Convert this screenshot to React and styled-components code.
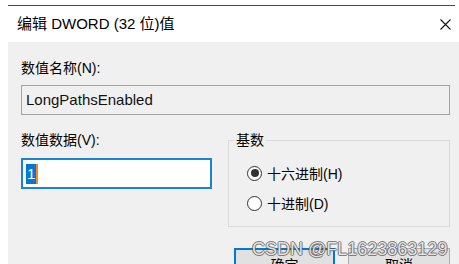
import React from "react";
import styled, { createGlobalStyle } from "styled-components";

const Global = createGlobalStyle`
  html, body { margin: 0; padding: 0; background: #ffffff; }
  body { font-family: "Liberation Sans", "Noto Sans CJK SC", sans-serif; color: #000; }
`;

const Page = styled.div`
  position: relative;
  width: 459px;
  height: 264px;
  overflow: hidden;
  background: #ffffff;
`;

const TopStrip = styled.div`
  height: 6px;
  display: flex;
  flex-direction: column;
  justify-content: flex-end;
`;

const TopRule = styled.div`
  height: 1px;
  margin: 0 4px 0 8px;
  background: #4a4a4a;
`;

const Dialog = styled.div`
  margin-left: 8px;
  display: flex;
  flex-direction: column;
`;

const TitleBar = styled.div`
  height: 36px;
  display: flex;
  align-items: center;
  justify-content: space-between;
  padding: 0 8px 0 9px;
  background: #ffffff;
`;

const Title = styled.div`
  font-size: 15px;
  line-height: 18px;
  color: #000;
`;

const Body = styled.div`
  background: #f0f0f0;
  padding: 17px 9px 0 13px;
  height: 240px;
  box-sizing: border-box;
`;

const FieldLabel = styled.div`
  font-size: 14px;
  line-height: 18px;
  color: #000;
`;

const NameBox = styled.div`
  margin-top: 8px;
  height: 30px;
  box-sizing: border-box;
  border: 1px solid #a3a3a3;
  background: #f0f0f0;
  padding-left: 4px;
  font-size: 15px;
  line-height: 28px;
  color: #111;
`;

const Row = styled.div`
  margin-top: 16px;
  display: flex;
  gap: 16px;
  align-items: flex-start;
`;

const DataColumn = styled.div`
  width: 191px;
  display: flex;
  flex-direction: column;
`;

const DataBox = styled.div`
  margin-top: 9px;
  height: 31px;
  box-sizing: border-box;
  border: 2px solid #1883d7;
  background: #ffffff;
  padding-left: 3px;
  display: flex;
  align-items: center;
`;

const Selected = styled.span`
  display: inline-block;
  height: 20px;
  line-height: 20px;
  padding: 0 1px;
  background: #0078d7;
  color: #ffffff;
  font-size: 15px;
`;

const Caret = styled.span`
  display: inline-block;
  width: 2px;
  height: 20px;
  background: #f08a24;
`;

const BaseGroup = styled.fieldset`
  flex: 1;
  margin: 0;
  padding: 0;
  min-width: 0;
  border: 1px solid #dadada;
`;

const Legend = styled.legend`
  margin-left: 5px;
  padding: 0 2px;
  font-size: 14px;
  line-height: 18px;
`;

const RadioList = styled.div`
  padding: 9px 0 8px 18px;
  display: flex;
  flex-direction: column;
`;

const RadioRow = styled.div`
  height: 30px;
  display: flex;
  align-items: center;
  gap: 5px;
  font-size: 14px;
`;

const RadioCircle = styled.span`
  width: 15px;
  height: 15px;
  box-sizing: border-box;
  border-radius: 50%;
  border: 1px solid #333333;
  background: #ffffff;
  display: flex;
  align-items: center;
  justify-content: center;
  &::after {
    content: "";
    width: 8px;
    height: 8px;
    border-radius: 50%;
    background: #333333;
    display: ${(p) => (p.$checked ? "block" : "none")};
  }
`;

const ButtonRow = styled.div`
  margin-top: 21px;
  display: flex;
  justify-content: flex-end;
  gap: 13px;
`;

const Button = styled.div`
  width: ${(p) => (p.$primary ? "101px" : "102px")};
  height: 32px;
  box-sizing: border-box;
  background: #e1e1e1;
  border: ${(p) => (p.$primary ? "2px solid #0078d7" : "1px solid #adadad")};
  display: flex;
  align-items: center;
  justify-content: center;
  font-size: 14px;
`;

const Watermark = styled.div`
  position: absolute;
  left: 252px;
  top: 240px;
  font-family: "Liberation Sans", sans-serif;
  font-size: 18px;
  line-height: 18px;
  color: rgba(255, 255, 255, 0.85);
  white-space: nowrap;
  text-shadow: 1px 0 0 rgba(80, 80, 80, 0.7), -1px 0 0 rgba(80, 80, 80, 0.7),
    0 1px 0 rgba(80, 80, 80, 0.7), 0 -1px 0 rgba(80, 80, 80, 0.7);
`;

const CloseIcon = () => (
  <svg width="11" height="11" viewBox="0 0 11 11">
    <path d="M0.5 0.5 L10.5 10.5 M10.5 0.5 L0.5 10.5" stroke="#111" strokeWidth="1.1" fill="none" />
  </svg>
);

export default function App() {
  return (
    <Page>
      <Global />
      <TopStrip>
        <TopRule />
      </TopStrip>
      <Dialog>
        <TitleBar>
          <Title>编辑 DWORD (32 位)值</Title>
          <CloseIcon />
        </TitleBar>
        <Body>
          <FieldLabel>数值名称(N):</FieldLabel>
          <NameBox>LongPathsEnabled</NameBox>
          <Row>
            <DataColumn>
              <FieldLabel>数值数据(V):</FieldLabel>
              <DataBox>
                <Selected>1</Selected>
                <Caret />
              </DataBox>
            </DataColumn>
            <BaseGroup>
              <Legend>基数</Legend>
              <RadioList>
                <RadioRow>
                  <RadioCircle $checked />
                  <span>十六进制(H)</span>
                </RadioRow>
                <RadioRow>
                  <RadioCircle />
                  <span>十进制(D)</span>
                </RadioRow>
              </RadioList>
            </BaseGroup>
          </Row>
          <ButtonRow>
            <Button $primary>确定</Button>
            <Button>取消</Button>
          </ButtonRow>
        </Body>
      </Dialog>
      <Watermark>CSDN @FL1623863129</Watermark>
    </Page>
  );
}
